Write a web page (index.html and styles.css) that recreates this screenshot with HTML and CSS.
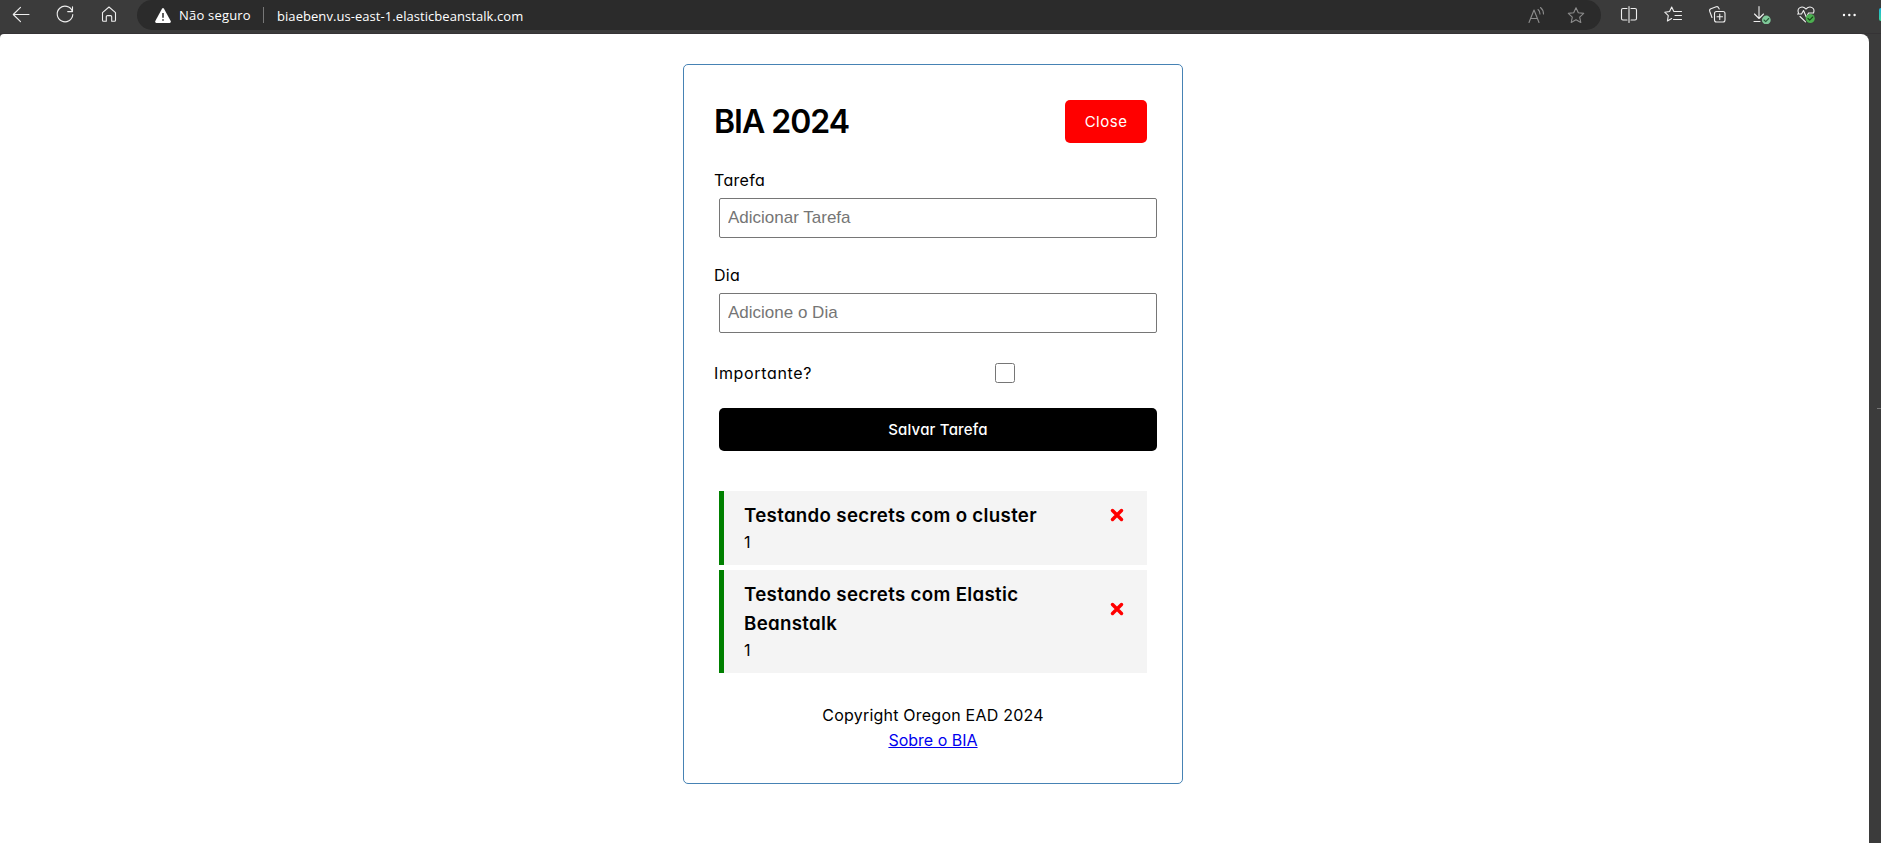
FILE: index.html
```html
<!DOCTYPE html>
<html lang="pt-BR">
<head>
<meta charset="utf-8">
<title>BIA 2024</title>
<link rel="stylesheet" href="styles.css">
</head>
<body>
<header class="toolbar">
  <div class="nav">
    <svg class="icon" viewBox="0 0 20 20"><path d="M18 10.500H2.500M9.500 3.300 2.300 10.500l7.200 7.200"/></svg>
    <svg class="icon" viewBox="0 0 20 20"><path d="M17.300 7.200A7.800 7.800 0 1 0 17.800 10.500M17.500 2.800v4.800h-4.800"/></svg>
    <svg class="icon" viewBox="0 0 20 20"><path d="M3.500 8.600 10 3l6.500 5.600V16.300a1 1 0 0 1-1 1h-2.800v-4.500a1.200 1.200 0 0 0-1.200-1.200h-3a1.200 1.200 0 0 0-1.200 1.200v4.500H4.500a1 1 0 0 1-1-1z"/></svg>
  </div>
  <div class="address">
    <svg class="warn" viewBox="0 0 16 15"><path d="M7 .8Q8-.6 9 .8l6.700 12.200Q16.300 14.800 14.700 15H1.300Q-.3 14.800.3 13z" fill="#fff"/><path d="M8 5v4.700M8 11.200v1.600" stroke="#2b2b2b" stroke-width="1.500"/></svg>
    <span class="insecure">Não seguro</span>
    <span class="divider"></span>
    <span class="url">biaebenv.us-east-1.elasticbeanstalk.com</span>
    <div class="address-actions">
      <svg class="icon dim" viewBox="0 0 20 20"><path d="M3 17.500 8 5l5 12.500M4.700 13.500h6.600M12 4.500q2 1.700 2 4.500M14.500 2.500q3 2.500 3 6.500"/></svg>
      <svg class="icon dim" viewBox="0 0 20 20"><path d="m10 2.800 2.300 5 5.400.6-4 3.700 1.100 5.400-4.800-2.700-4.800 2.700 1.100-5.400-4-3.700 5.400-.6z"/></svg>
    </div>
  </div>
  <div class="tools">
    <svg class="icon" viewBox="0 0 20 20"><path d="M8 4.500H4A1.500 1.500 0 0 0 2.500 6v8.500A1.500 1.500 0 0 0 4 16h4M12 4.500h4A1.500 1.500 0 0 1 17.500 6v8.500A1.500 1.500 0 0 1 16 16h-4M10 2.500v16"/></svg>
    <svg class="icon" viewBox="0 0 20 20"><path d="M12.500 7.500 10.700 7.300 8.700 3 6.600 7.500 1.700 8.200l3.600 3.500-.9 5.300 4.300-2.500M11 7.500h7.500M12 11.500h6.500M10.500 15.500h8"/></svg>
    <svg class="icon" viewBox="0 0 20 20"><rect x="7.500" y="7.500" width="10.500" height="10.500" rx="2"/><path d="M12.750 10v5.500M10 12.750h5.500M5 13.500 2.700 7.200a2 2 0 0 1 1.200-2.500l5.300-1.900a2 2 0 0 1 2.500 1.200L12.200 5"/></svg>
    <svg class="icon" viewBox="0 0 20 20"><path d="M8 2.500v12M3.500 10 8 14.500l4.500-4.500M3 17.500h6"/><circle cx="15.300" cy="16" r="4.400" fill="#80c99a" stroke="none"/><path d="m13 16 1.700 1.700 3-3.200" stroke="#285c39"/></svg>
    <svg class="icon" viewBox="0 0 20 20"><path d="M2.500 9C.5 4 6 1 10 5c4-4 9.500-1 7.500 4M1.500 10h4l2-3.500 3 7 2-4.500h5M4 12.500l5.500 5.300"/><circle cx="14.300" cy="14.500" r="4.500" fill="#4caf50" stroke="none"/><path d="m12 14.500 1.700 1.700 3-3.200" stroke="#164b18"/></svg>
    <svg class="icon" viewBox="0 0 20 20"><g fill="#fff" stroke="none"><circle cx="4" cy="11" r="1.200"/><circle cx="9.300" cy="11" r="1.200"/><circle cx="14.600" cy="11" r="1.200"/></g></svg>
  </div>
  <span class="assistant"></span>
</header>
<div class="window">
  <main class="page">
    <section class="container">
      <div class="header">
        <h1 class="title">BIA 2024</h1>
        <button class="btn btn-close">Close</button>
      </div>
      <form class="add-form">
        <div class="form-control">
          <label class="label-task">Tarefa</label>
          <input class="field" type="text" placeholder="Adicionar Tarefa">
        </div>
        <div class="form-control">
          <label class="label-day">Dia</label>
          <input class="field" type="text" placeholder="Adicione o Dia">
        </div>
        <div class="form-control form-control-check">
          <label class="label-important">Importante?</label>
          <input class="check" type="checkbox">
        </div>
        <button class="btn btn-block" type="button">Salvar Tarefa</button>
      </form>
      <div class="task">
        <div><h3>Testando secrets com o cluster</h3><p>1</p></div>
        <svg class="remove" viewBox="0 0 14 14"><path d="m2.500 2.500 9 9m0-9-9 9"/></svg>
      </div>
      <div class="task">
        <div><h3>Testando secrets com Elastic<br>Beanstalk</h3><p>1</p></div>
        <svg class="remove remove-low" viewBox="0 0 14 14"><path d="m2.500 2.500 9 9m0-9-9 9"/></svg>
      </div>
      <footer class="footer">
        <p class="copyright">Copyright Oregon EAD 2024</p>
        <a class="about" href="#">Sobre o BIA</a>
      </footer>
    </section>
  </main>
  <aside class="edge"><span class="handle"></span></aside>
</div>
</body>
</html>
```
FILE: styles.css
```css
* { box-sizing: border-box; margin: 0; padding: 0; }
body {
  height: 843px;
  overflow: hidden;
  background: #3b3b3b;
  color: #000;
  font-family: Inter, "Open Sans", sans-serif;
  font-feature-settings: "cv11";
  font-size: 16px;
  line-height: 25px;
}
.toolbar { display: flex; height: 34px; align-items: flex-start; border-bottom: 1px solid #353335; }
.icon { width: 20px; height: 20px; fill: none; stroke: #eee; stroke-width: 1.1; stroke-linejoin: round; stroke-linecap: round; flex: none; }
.dim { stroke: #8c8c8c; }
.nav { width: 137px; height: 30px; padding: 4px 0 0 11px; display: flex; gap: 24px; }
.address {
  width: 1464px; height: 30px; padding: 0 15px 0 18px;
  display: flex; align-items: center;
  background: #2b2b2b; border-radius: 15px; color: #fff;
  font: 13px/30px "Open Sans", "Noto Sans", sans-serif;
}
.warn { width: 16px; height: 15px; margin-right: 8px; }
.insecure { width: 84px; white-space: nowrap; letter-spacing: .2px; }
.url { padding-top: 1px; letter-spacing: .06px; }
.divider { width: 1px; height: 16px; background: #777; margin-right: 13px; }
.address-actions { margin-left: auto; display: flex; gap: 20px; }
.tools { display: flex; gap: 24.3px; padding: 4px 0 0 17.500px; width: 277px; }
.assistant { width: 2px; height: 13px; margin: 8px 0 0 auto; border-radius: 3px 0 0 3px; background: linear-gradient(#18b4dc, #3fd69a); }
.window { display: flex; height: 809px; }
.page { width: 1869px; padding: 30px 3px 0 0; background: #fff; border-radius: 4px 8px 0 0; }
.container { width: 500px; height: 720px; margin: 0 auto; padding: 30px; border: 1px solid steelblue; border-radius: 5px; }
.header { display: flex; justify-content: space-between; align-items: center; height: 53px; margin-bottom: 20px; }
.title { font-size: 32px; font-weight: 600; line-height: 48px; letter-spacing: -1px; padding-top: 1px; }
.btn { height: 43px; margin: 5px; border: 0; border-radius: 5px; background: #000; color: #fff; font: 500 15px Inter, sans-serif; font-feature-settings: "cv11"; letter-spacing: .2px; }
.btn-close { width: 82px; background: red; font-weight: 400; letter-spacing: .5px; }
.add-form { margin-bottom: 40px; }
.form-control { margin-bottom: 20px; height: 75px; }
.form-control label { display: block; }
.label-task { letter-spacing: .3px; }
.label-day { letter-spacing: .3px; }
.label-important { letter-spacing: .65px; }
.field { display: block; width: 438px; height: 40px; margin: 5px; padding: 3px 8px; border: 1px solid #767676; border-radius: 2px; font: 17px "Liberation Sans", Arial, sans-serif; }
.field::placeholder { color: #757575; }
.form-control-check { display: flex; height: 30px; align-items: center; }
.form-control-check label { width: 280.5px; }
.check { width: 20px; height: 20px; }
.btn-block { display: block; width: 438px; margin: 0 5px; }
.task { display: flex; justify-content: space-between; width: 428px; margin: 5px; padding: 10px 20px; border-left: 5px solid green; background: #f4f4f4; }
.task h3 { font-size: 18.7px; font-weight: 600; line-height: 29px; letter-spacing: .32px; white-space: nowrap; }
.remove { width: 14px; height: 14px; margin: 7px 3px 0 0; stroke: red; stroke-width: 3.5; stroke-linecap: round; }
.remove-low { margin-top: 22px; }
.footer { margin-top: 30px; text-align: center; }
.copyright { letter-spacing: .22px; }
.about { color: #0000ee; }
.edge { width: 12px; display: flex; justify-content: flex-end; padding-top: 374px; }
.handle { width: 4px; height: 1px; background: #777; }
```
